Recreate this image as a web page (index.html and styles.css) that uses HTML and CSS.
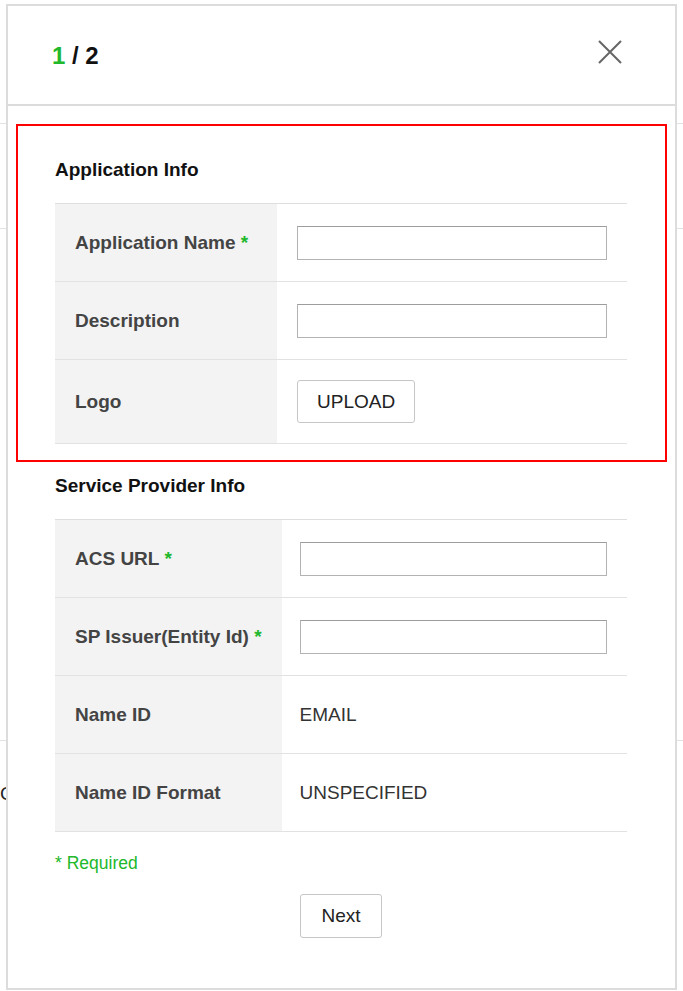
FILE: index.html
```html
<!DOCTYPE html>
<html lang="en">
<head>
  <meta charset="utf-8">
  <title>New SAML Application</title>
  <meta name="viewport" content="width=device-width, initial-scale=1.0">
  <link rel="stylesheet" href="styles.css">
</head>
<body>
<!-- page behind the dialog -->
<div class="page">
  <div class="page-row page-row--top"></div>
  <div class="page-row page-row--mid"></div>
  <div class="page-row page-row--list"></div>
  <div class="page-foot">Cancel</div>
</div>

<div class="modal" role="dialog" aria-labelledby="step">
  <header class="modal-header">
    <div id="step" class="step"><span class="step-current">1</span> / 2</div>
    <button class="close" type="button" aria-label="Close">
      <svg width="26" height="26" viewBox="0 0 26 26">
        <path d="M2 2 L24 24 M24 2 L2 24" stroke="#666" stroke-width="2" fill="none"/>
      </svg>
    </button>
  </header>

  <div class="modal-body">
    <section class="section section--highlight">
      <h2>Application Info</h2>
      <table class="info-table">
        <tr>
          <th>Application Name <span class="req">*</span></th>
          <td><input type="text"></td>
        </tr>
        <tr>
          <th>Description</th>
          <td><input type="text"></td>
        </tr>
        <tr class="row-upload">
          <th>Logo</th>
          <td><button class="btn" type="button">UPLOAD</button></td>
        </tr>
      </table>
    </section>

    <section class="section">
      <h2>Service Provider Info</h2>
      <table class="info-table info-table--wide">
        <tr>
          <th>ACS URL <span class="req">*</span></th>
          <td><input type="text"></td>
        </tr>
        <tr>
          <th>SP Issuer(Entity Id) <span class="req">*</span></th>
          <td><input type="text"></td>
        </tr>
        <tr>
          <th>Name ID</th>
          <td>EMAIL</td>
        </tr>
        <tr>
          <th>Name ID Format</th>
          <td>UNSPECIFIED</td>
        </tr>
      </table>
      <p class="required-note">* Required</p>
      <div class="actions">
        <button class="btn" type="button">Next</button>
      </div>
    </section>
  </div>
</div>
</body>
</html>
```

FILE: styles.css
```css
html {
  box-sizing: border-box;
}

*, *:before, *:after {
  box-sizing: inherit;
}

body {
  margin: 0;
  font-family: 'Liberation Sans', Arial, Helvetica, sans-serif;
  font-size: 19px;
  color: #333;
  background: #fff;
  overflow: hidden;
}

/* background page */
.page {
  width: 100%;
}

.page-row {
  border-bottom: 1px solid #e2e2e2;
}

.page-row--top {
  height: 124px;
}

.page-row--mid {
  height: 105px;
}

.page-row--list {
  height: 512px;
}

.page-foot {
  padding: 42px 0 0 0;
  line-height: 22px;
  color: #222;
}

/* dialog */
.modal {
  position: fixed;
  top: 4px;
  left: 6px;
  width: 671px;
  height: 986px;
  background: #fff;
  border: 2px solid #dcdcdc;
  display: flex;
  flex-direction: column;
}

.modal-header {
  height: 100px;
  flex-shrink: 0;
  display: flex;
  align-items: center;
  justify-content: space-between;
  padding: 0 52px 0 44px;
  border-bottom: 2px solid #dcdcdc;
}

.step {
  font-size: 24px;
  font-weight: 700;
  color: #111;
  padding-top: 2px;
}

.step-current {
  color: #21b82b;
}

.close {
  border: 0;
  background: none;
  padding: 0;
  width: 26px;
  height: 26px;
  cursor: pointer;
  margin-bottom: 7px;
}

.close svg {
  display: block;
}

.modal-body {
  padding: 18px 0 0;
}

.section {
  padding: 13px 48px 0 47px;
}

.section--highlight {
  margin: 0 8px;
  padding: 33px 38px 16px 37px;
  border: 2px solid #f00;
}

h2 {
  margin: 0 0 22px;
  font-size: 19px;
  line-height: 22px;
  font-weight: 700;
  color: #111;
}

.info-table {
  width: 100%;
  border-collapse: collapse;
  border-top: 1px solid #dedede;
}

.info-table tr {
  border-bottom: 1px solid #e2e2e2;
}

.info-table th,
.info-table td {
  height: 78px;
  padding: 20px;
  vertical-align: middle;
  text-align: left;
}

.info-table th {
  width: 222px;
  background: #f3f3f3;
  font-weight: 700;
  color: #444;
  white-space: nowrap;
}

.info-table--wide th {
  width: 225px;
}

.info-table--wide td {
  padding-left: 18px;
}

.info-table td {
  color: #333;
}

.row-upload th,
.row-upload td {
  height: 83px;
}

.req {
  color: #21b82b;
}

input[type="text"] {
  display: block;
  width: 100%;
  height: 34px;
  border: 1px solid #b3b3b3;
  border-top-color: #9d9d9d;
  font: inherit;
  padding: 0 8px;
}

.btn {
  height: 44px;
  padding: 0 20px;
  background: #fff;
  border: 1px solid #c6c6c6;
  border-radius: 3px;
  font-family: inherit;
  font-size: 19px;
  color: #222;
  cursor: pointer;
}

.row-upload .btn {
  height: 43px;
  padding: 0 19px;
}

.required-note {
  margin: 21px 0 21px;
  font-size: 17.5px;
  line-height: 20px;
  color: #21b82b;
}

.actions {
  display: flex;
  justify-content: center;
}
```
